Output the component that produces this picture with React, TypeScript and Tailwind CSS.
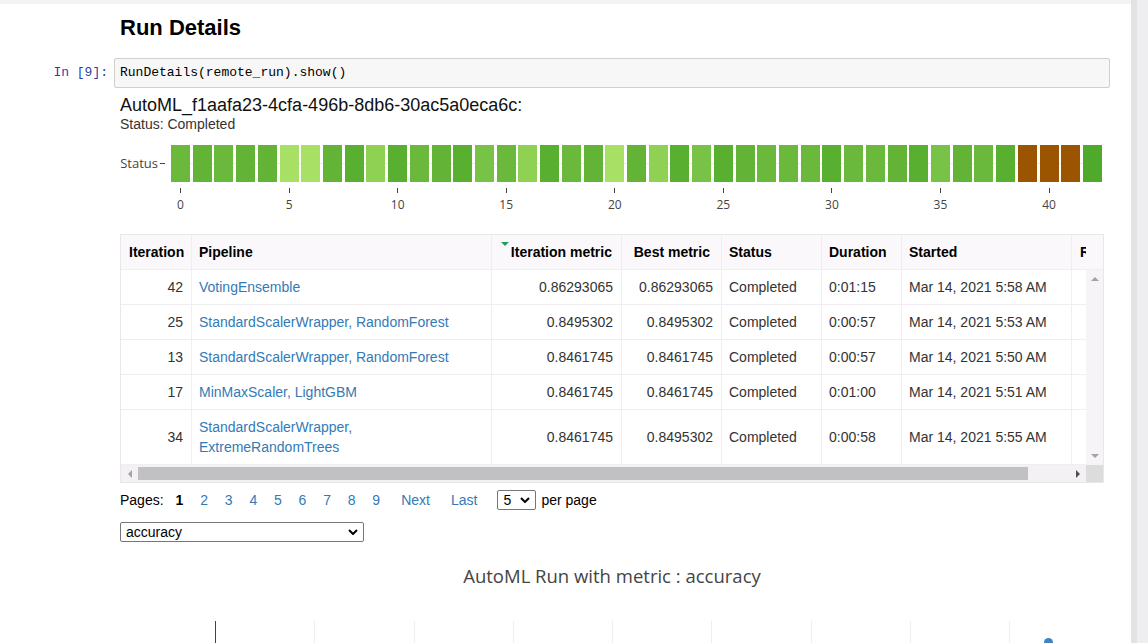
import React from "react";

type Row = { it: number; pipe: string; im: string; bm: string; dur: string; start: string };

const rows: Row[] = [
  { it: 42, pipe: "VotingEnsemble", im: "0.86293065", bm: "0.86293065", dur: "0:01:15", start: "Mar 14, 2021 5:58 AM" },
  { it: 25, pipe: "StandardScalerWrapper, RandomForest", im: "0.8495302", bm: "0.8495302", dur: "0:00:57", start: "Mar 14, 2021 5:53 AM" },
  { it: 13, pipe: "StandardScalerWrapper, RandomForest", im: "0.8461745", bm: "0.8461745", dur: "0:00:57", start: "Mar 14, 2021 5:50 AM" },
  { it: 17, pipe: "MinMaxScaler, LightGBM", im: "0.8461745", bm: "0.8461745", dur: "0:01:00", start: "Mar 14, 2021 5:51 AM" },
  { it: 34, pipe: "StandardScalerWrapper, ExtremeRandomTrees", im: "0.8461745", bm: "0.8495302", dur: "0:00:58", start: "Mar 14, 2021 5:55 AM" },
];

// status heatmap, one cell per iteration
const bars = "M MD M MD MD L L MD D LM D M MD D ML M LM D M MD L MD LM D ML D MD M M M D M M MD D ML MD M D B B B X".split(" ");

const barColor: Record<string, string> = {
  L: "bg-[#a7e065]",
  LM: "bg-[#8fd152]",
  ML: "bg-[#78c347]",
  M: "bg-[#6bb93c]",
  MD: "bg-[#63b337]",
  D: "bg-[#59af30]",
  X: "bg-[#4fa92b]",
  B: "bg-[#9b5500]",
};

const ticks = [
  { label: "0", cls: "col-start-1" },
  { label: "5", cls: "col-start-6" },
  { label: "10", cls: "col-start-11" },
  { label: "15", cls: "col-start-16" },
  { label: "20", cls: "col-start-21" },
  { label: "25", cls: "col-start-26" },
  { label: "30", cls: "col-start-31" },
  { label: "35", cls: "col-start-36" },
  { label: "40", cls: "col-start-41" },
];

const pages = ["2", "3", "4", "5", "6", "7", "8", "9"];

function Chevron() {
  return (
    <svg width="10" height="6" viewBox="0 0 10 6" fill="none">
      <path d="M1 1l4 4 4-4" stroke="#000" strokeWidth="2" />
    </svg>
  );
}

function FakeSelect({ value, w }: { value: string; w: string }) {
  return (
    <div className={`${w} h-[20px] border border-[#767676] rounded-[2px] flex items-center justify-between pl-[5px] pr-[5px] text-[14px] text-black`}>
      <span>{value}</span>
      <Chevron />
    </div>
  );
}

const cell = "shrink-0 flex items-center px-2 py-[7px] leading-[20px] border-r border-b border-[#f0eef0]";
const head = "shrink-0 flex items-center h-[35px] px-2 border-r border-b border-[#f0eef0] font-bold text-black";

function RunsTable() {
  return (
    <div className="w-[984px] border border-[#e9e7e9] text-[14px] text-[#333]">
      {/* header */}
      <div className="flex bg-[#fbf8fb]">
        <div className="w-[965px] overflow-hidden flex">
          <div className={`${head} w-[71px]`}>Iteration</div>
          <div className={`${head} w-[300px] pl-[7px]`}>Pipeline</div>
          <div className={`${head} w-[130px] justify-end pr-[9px] relative`}>
            <span className="absolute left-[9px] top-[7px] w-0 h-0 border-x-[4px] border-x-transparent border-t-[4px] border-t-[#1e9e5e]" />
            Iteration metric
          </div>
          <div className={`${head} w-[100px] justify-end pr-[11px]`}>Best metric</div>
          <div className={`${head} w-[100px] pl-[7px]`}>Status</div>
          <div className={`${head} w-[80px] pl-[7px]`}>Duration</div>
          <div className={`${head} w-[170px] pl-[7px]`}>Started</div>
          <div className={`${head} w-[120px]`}>Run ID</div>
        </div>
        <div className="w-[17px] h-[35px] border-b border-[#f0eef0]" />
      </div>

      {/* body */}
      <div className="flex">
        <div className="w-[965px] overflow-hidden">
          {rows.map((r) => (
            <div key={r.it} className="flex">
              <div className={`${cell} w-[71px] justify-end`}>{r.it}</div>
              <div className={`${cell} w-[300px] pl-[7px] text-[#337ab7]`}>{r.pipe}</div>
              <div className={`${cell} w-[130px] justify-end`}>{r.im}</div>
              <div className={`${cell} w-[100px] justify-end`}>{r.bm}</div>
              <div className={`${cell} w-[100px] pl-[7px]`}>Completed</div>
              <div className={`${cell} w-[80px] pl-[7px]`}>{r.dur}</div>
              <div className={`${cell} w-[170px] pl-[7px]`}>{r.start}</div>
              <div className={`${cell} w-[120px]`} />
            </div>
          ))}
        </div>
        <div className="w-[17px] bg-[#f7f4f7] flex flex-col items-center justify-between py-[7px]">
          <span className="w-0 h-0 border-x-[4px] border-x-transparent border-b-[4px] border-b-[#a3a3a3]" />
          <span className="w-0 h-0 border-x-[4px] border-x-transparent border-t-[4px] border-t-[#a3a3a3]" />
        </div>
      </div>

      {/* horizontal scrollbar */}
      <div className="flex h-[17px]">
        <div className="w-[965px] bg-[#f4f1f4] flex items-center">
          <div className="w-[17px] flex justify-center">
            <span className="w-0 h-0 border-y-[4px] border-y-transparent border-r-[4px] border-r-[#a3a3a3]" />
          </div>
          <div className="w-[890px] h-[13px] bg-[#c1c0c2]" />
          <div className="flex-1" />
          <div className="w-[17px] flex justify-center">
            <span className="w-0 h-0 border-y-[4px] border-y-transparent border-l-[4px] border-l-[#505050]" />
          </div>
        </div>
        <div className="w-[17px] bg-[#dcdcdc]" />
      </div>
    </div>
  );
}

export default function App() {
  return (
    <div className="font-['Liberation_Sans',Arial,sans-serif] w-[1148px] h-[643px] overflow-hidden bg-white flex">
      <div className="w-[1131px] flex flex-col">
        <div className="h-[4px] shrink-0 bg-[#f3f3f3]" />

        <h2 className="mt-[12px] pl-[120px] text-[22px] leading-[24px] font-bold text-black">Run Details</h2>

        {/* code cell */}
        <div className="mt-[18px] flex">
          <div className="w-[114px] pr-[6px] text-right font-['Liberation_Mono',monospace] text-[13px] leading-[30px] text-[#303f9f]">In [9]:</div>
          <div className="w-[996px] h-[30px] border border-[#cfcfcf] rounded-[2px] bg-[#f7f7f7] pl-[5px] font-['Liberation_Mono',monospace] text-[13px] leading-[28px] text-black">
            RunDetails(remote_run).show()
          </div>
        </div>

        {/* output */}
        <div className="pl-[120px]">
          <div className="mt-[7px] text-[18px] leading-[20px] text-[#111]">AutoML_f1aafa23-4cfa-496b-8db6-30ac5a0eca6c:</div>
          <div className="mt-[1px] text-[14px] leading-[16px] text-[#333]">Status: Completed</div>

          {/* status heatmap */}
          <div className="mt-[13px] flex font-['Open_Sans',sans-serif] text-[12px] text-[#444]">
            <div className="w-[51px] h-[37px] flex items-center justify-end">
              <span className="text-[13px]">Status</span>
              <span className="ml-[2px] mr-[6px] w-[5px] h-px bg-[#444]" />
            </div>
            <div className="w-[931px]">
              <div className="h-[37px] grid grid-cols-[repeat(43,minmax(0,1fr))] gap-x-[2.7px] bg-[linear-gradient(to_bottom,transparent_18px,#ebebeb_18px,#ebebeb_19px,transparent_19px)]">
                {bars.map((b, i) => (
                  <div key={i} className={barColor[b]} />
                ))}
              </div>
              <div className="grid grid-cols-[repeat(43,minmax(0,1fr))] gap-x-[2.7px]">
                {ticks.map((t) => (
                  <div key={t.label} className={`${t.cls} row-start-1 flex flex-col items-center`}>
                    <span className="mt-[6px] w-px h-[5px] bg-[#444]" />
                    <span className="mt-[5px] leading-[14px] whitespace-nowrap">{t.label}</span>
                  </div>
                ))}
              </div>
            </div>
          </div>

          <div className="mt-[22px]">
            <RunsTable />
          </div>

          {/* pagination */}
          <div className="mt-[7px] h-[20px] flex items-center text-[14px] text-black">
            <span>Pages:</span>
            <span className="ml-[12px] font-bold">1</span>
            {pages.map((p) => (
              <span key={p} className="ml-[16.8px] text-[#337ab7]">{p}</span>
            ))}
            <span className="ml-[21px] text-[#337ab7]">Next</span>
            <span className="ml-[21px] text-[#337ab7]">Last</span>
            <div className="ml-[20px]">
              <FakeSelect value="5" w="w-[39px]" />
            </div>
            <span className="ml-[5px]">per page</span>
          </div>

          <div className="mt-[12px]">
            <FakeSelect value="accuracy" w="w-[244px]" />
          </div>

          <div className="mt-[24px] w-[984px] text-center font-['Open_Sans',sans-serif] text-[18.5px] leading-[20px] text-[#444]">
            AutoML Run with metric : accuracy
          </div>

          {/* plot grid */}
          <div className="mt-[35px] ml-[95px] flex h-[22px]">
            <div className="w-[99.3px] border-l border-[#444]" />
            <div className="w-[99.3px] border-l border-[#eeeeee]" />
            <div className="w-[99.3px] border-l border-[#eeeeee]" />
            <div className="w-[99.3px] border-l border-[#eeeeee]" />
            <div className="w-[99.3px] border-l border-[#eeeeee]" />
            <div className="w-[99.3px] border-l border-[#eeeeee]" />
            <div className="w-[99.3px] border-l border-[#eeeeee]" />
            <div className="w-[99.3px] border-l border-[#eeeeee]" />
            <div className="w-[60px] border-l border-[#eeeeee] relative">
              <span className="absolute left-[34px] top-[17px] w-[9px] h-[9px] rounded-full bg-[#3d85c6]" />
            </div>
          </div>
        </div>
      </div>
      <div className="flex-1 border-l-[6px] border-[#e4e2e4] bg-[#eeedef]" />
    </div>
  );
}
